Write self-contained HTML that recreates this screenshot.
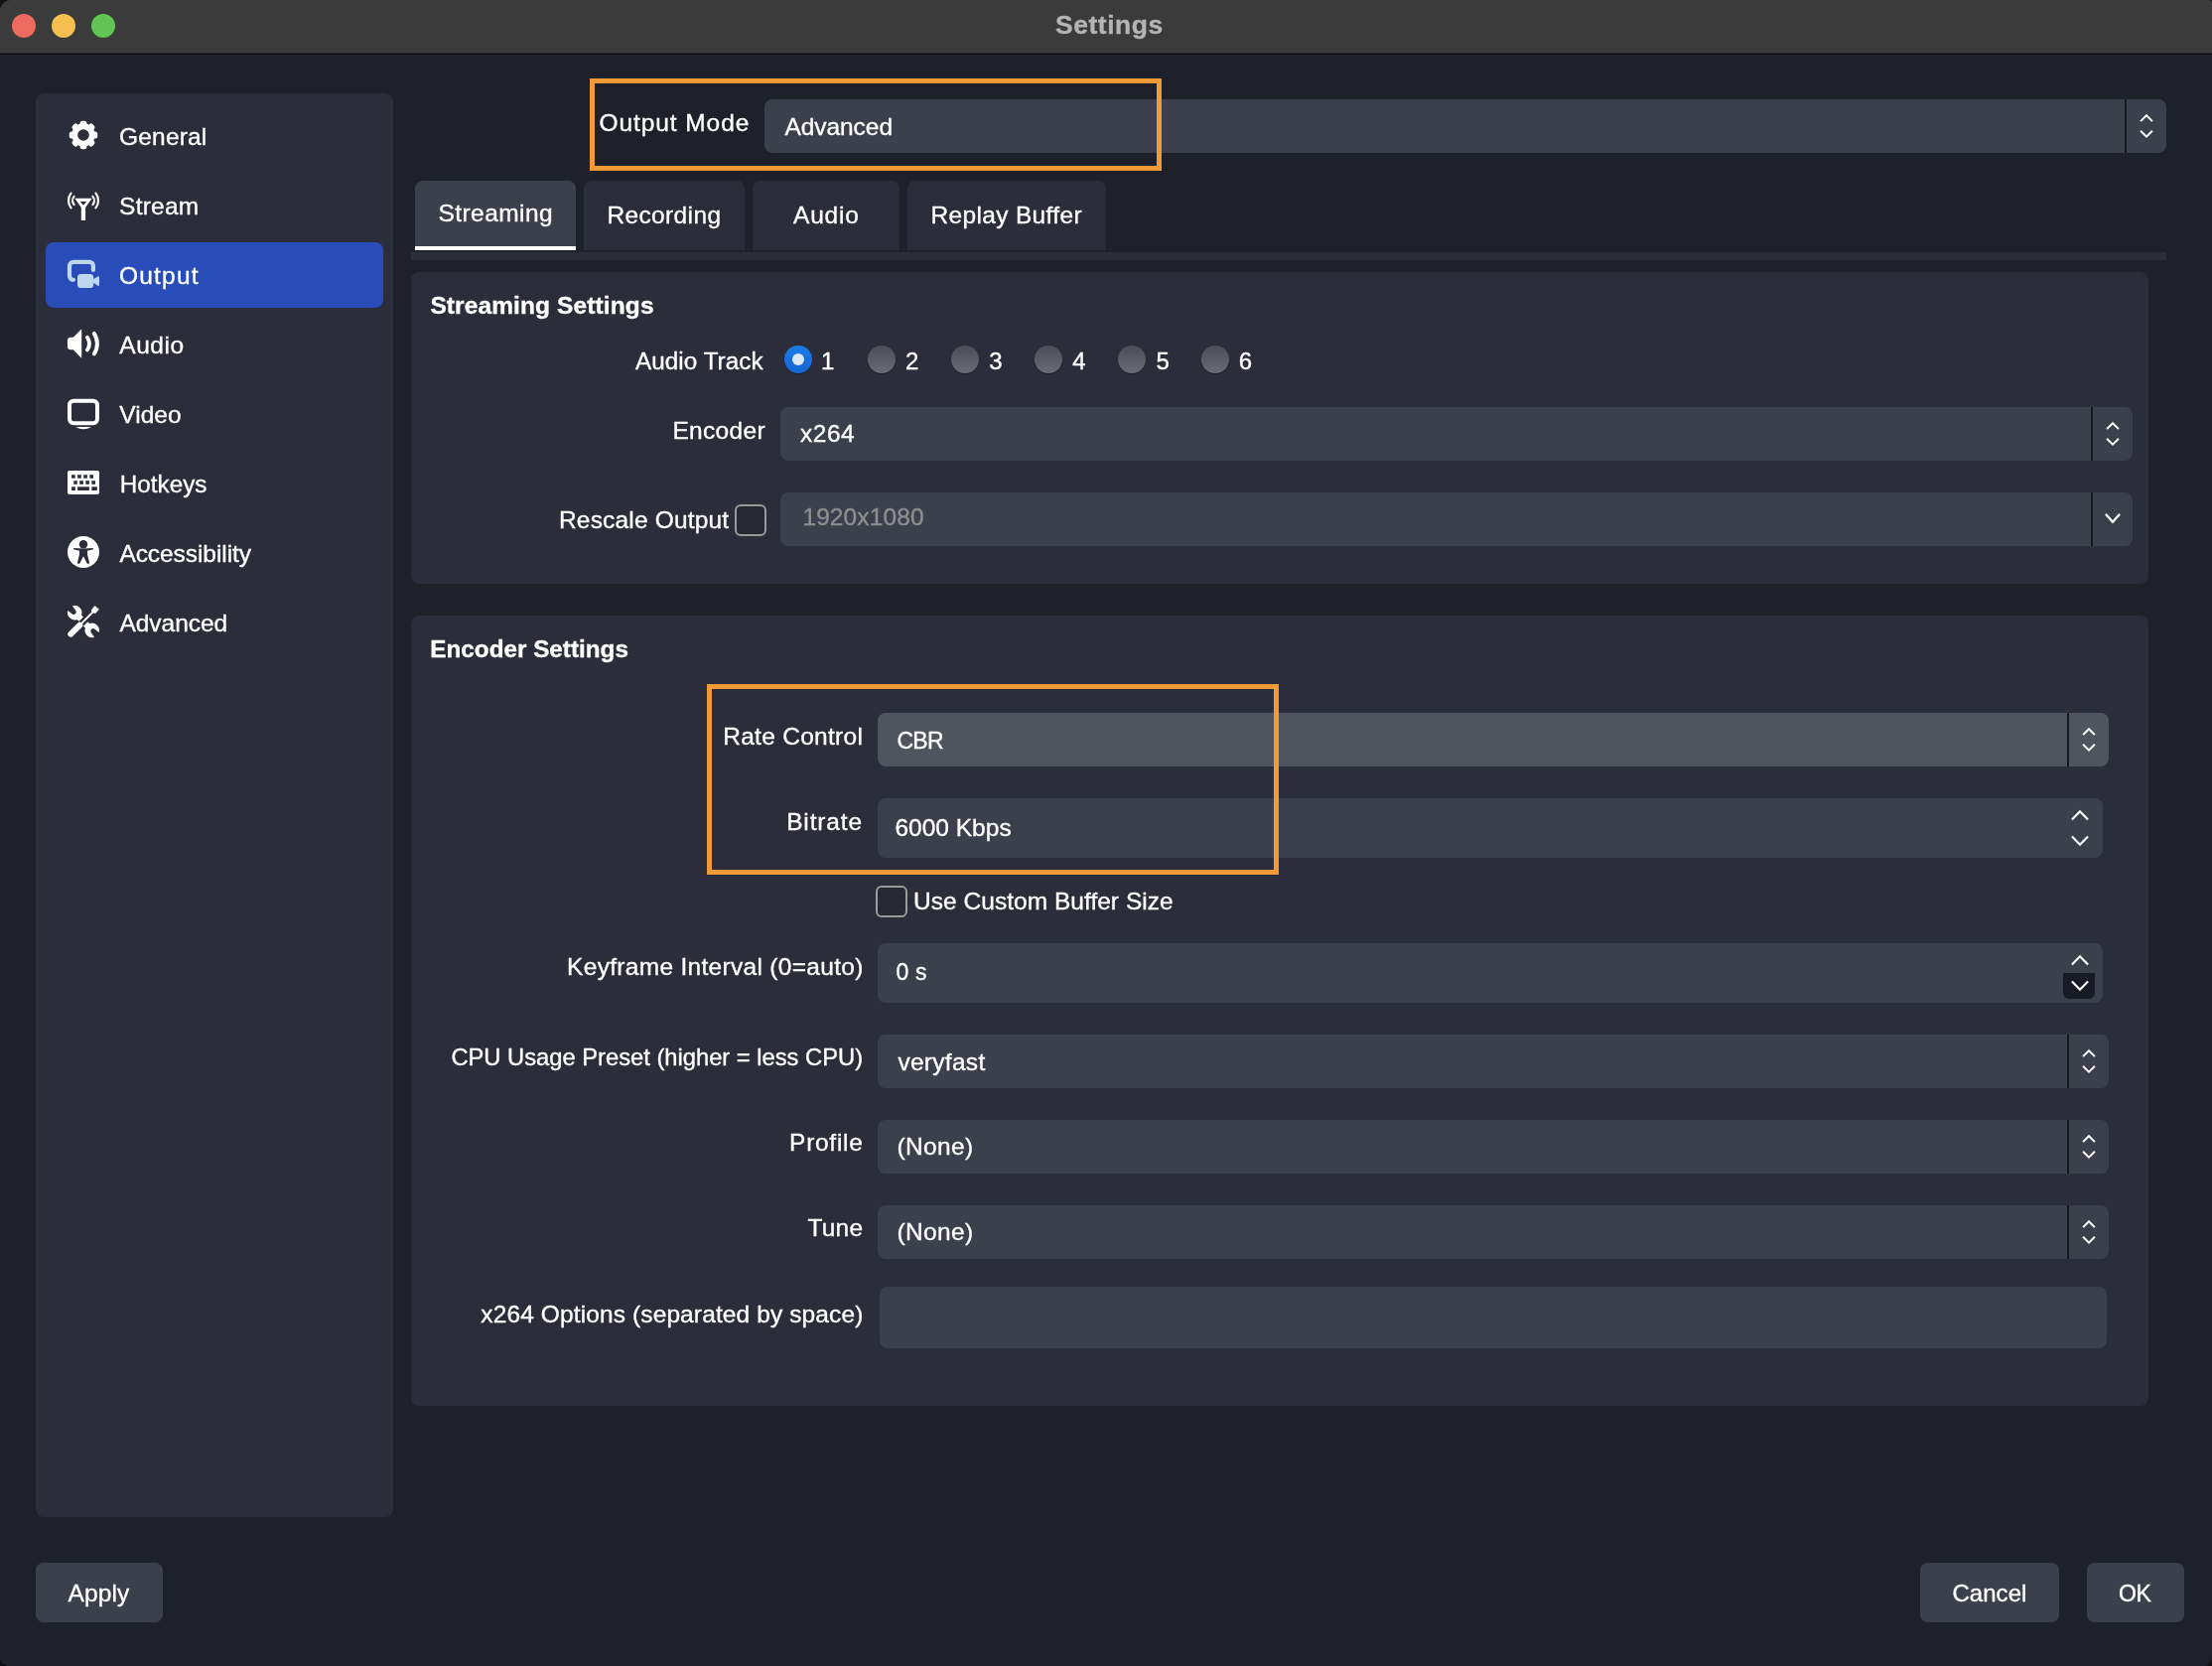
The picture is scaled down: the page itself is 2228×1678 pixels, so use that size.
<!DOCTYPE html>
<html lang="en"><head><meta charset="utf-8"><title>Settings</title>
<style>

html,body{margin:0;padding:0;background:#101012;}
body{width:2228px;height:1678px;overflow:hidden;}
#win{position:relative;width:2228px;height:1678px;background:#1f212a;border-radius:11px 3px 9px 9px;overflow:hidden;font-family:"Liberation Sans",sans-serif;}
#txt{position:absolute;left:0;top:0;width:2228px;height:1678px;will-change:transform;}
.t{position:absolute;white-space:pre;font-size:24px;line-height:30px;color:#fefefe;-webkit-text-stroke:0.35px currentColor;}
.b{position:absolute;box-sizing:border-box;}
.panel{background:#2b2d3a;border-radius:8px;}
.inp{background:#3c404d;border-radius:8px;}
.sep{background:#15171d;}
.tab{background:#2b2d3a;border-radius:8px 8px 0 0;}
.hl{border:5px solid #f39a38;}
.chk{border:2px solid #9a9a9a;border-radius:6px;background:#272934;}
.radio{border-radius:50%;width:28px;height:28px;background:linear-gradient(#4a4d57,#6a6c75);box-shadow:0 1px 1px rgba(0,0,0,.35);}
.radio.on{background:linear-gradient(#1b7ce8,#1466d2);}
.radio.on::after{content:"";position:absolute;left:8px;top:8px;width:12px;height:12px;border-radius:50%;background:#dde9fa;}
svg{position:absolute;overflow:visible;}
.ch{fill:none;stroke:#fefefe;stroke-width:2;stroke-linecap:square;stroke-linejoin:miter;}
.ch2{fill:none;stroke:#fefefe;stroke-width:2.2;stroke-linecap:square;stroke-linejoin:miter;}

</style></head>
<body>
<div id="win">
<div class="b " style="left:0px;top:0px;width:2228px;height:53px;background:#3b3b3b;"></div>
<div class="b " style="left:0px;top:53px;width:2228px;height:1px;background:#262626;"></div>
<div class="b " style="left:0px;top:54px;width:2228px;height:1px;background:#0c0c0e;"></div>
<div class="b" style="left:12px;top:14px;width:24px;height:24px;border-radius:50%;background:#ed6a5e;"></div>
<div class="b" style="left:52px;top:14px;width:24px;height:24px;border-radius:50%;background:#f5bf4f;"></div>
<div class="b" style="left:92px;top:14px;width:24px;height:24px;border-radius:50%;background:#61c554;"></div>
<div class="b panel" style="left:36px;top:94px;width:360px;height:1434px;"></div>
<div class="b " style="left:46px;top:244px;width:340px;height:66px;background:#284cb8;border-radius:8px;"></div>
<div class="b inp" style="left:770px;top:100px;width:1412px;height:54px;"></div><div class="b sep" style="left:2140px;top:100px;width:2px;height:54px;"></div><svg style="left:0;top:0" width="1" height="1"><polyline class="ch" points="2156.8,121.4 2162,116.2 2167.2,121.4"/><polyline class="ch" points="2156.8,132.4 2162,137.6 2167.2,132.4"/></svg>
<div class="b hl" style="left:594px;top:79px;width:576px;height:93px;"></div>
<div class="b tab" style="left:418px;top:182px;width:162px;height:70px;background:#3c404d;border-bottom:4px solid #fefefe;"></div>
<div class="b tab" style="left:588px;top:182px;width:162px;height:70px;"></div>
<div class="b tab" style="left:758px;top:182px;width:148px;height:70px;"></div>
<div class="b tab" style="left:914px;top:182px;width:200px;height:70px;"></div>
<div class="b " style="left:414px;top:254px;width:1768px;height:8px;background:#2b2d3a;"></div>
<div class="b panel" style="left:414px;top:274px;width:1750px;height:314px;"></div>
<div class="b radio on" style="left:790px;top:348px;"></div>
<div class="b radio" style="left:874px;top:348px;"></div>
<div class="b radio" style="left:958px;top:348px;"></div>
<div class="b radio" style="left:1042px;top:348px;"></div>
<div class="b radio" style="left:1126px;top:348px;"></div>
<div class="b radio" style="left:1210px;top:348px;"></div>
<div class="b inp" style="left:786px;top:410px;width:1362px;height:54px;"></div><div class="b sep" style="left:2106px;top:410px;width:2px;height:54px;"></div><svg style="left:0;top:0" width="1" height="1"><polyline class="ch" points="2122.8,431.4 2128,426.2 2133.2,431.4"/><polyline class="ch" points="2122.8,442.4 2128,447.6 2133.2,442.4"/></svg>
<div class="b chk" style="left:740px;top:508px;width:32px;height:32px;"></div>
<div class="b inp" style="left:786px;top:496px;width:1362px;height:54px;"></div>
<div class="b sep" style="left:2106px;top:496px;width:2px;height:54px;"></div>
<svg style="left:0;top:0" width="1" height="1"><polyline class="ch2" points="2121.6,518.6 2128,525.8000000000001 2134.4,518.6"/></svg>
<div class="b panel" style="left:414px;top:620px;width:1750px;height:796px;"></div>
<div class="b inp" style="left:884px;top:718px;width:1240px;height:54px;background:#50545f;"></div><div class="b sep" style="left:2082px;top:718px;width:2px;height:54px;"></div><svg style="left:0;top:0" width="1" height="1"><polyline class="ch" points="2098.8,739.4 2104,734.2 2109.2,739.4"/><polyline class="ch" points="2098.8,750.4 2104,755.6 2109.2,750.4"/></svg>
<div class="b inp" style="left:884px;top:804px;width:1234px;height:60px;"></div>
<svg style="left:0;top:0" width="1" height="1"><polyline class="ch2" points="2087.7,824.8 2095,817.3 2102.3,824.8"/><polyline class="ch2" points="2087.7,843.2 2095,850.7 2102.3,843.2"/></svg>
<div class="b hl" style="left:712px;top:689px;width:576px;height:192px;"></div>
<div class="b chk" style="left:882px;top:892px;width:32px;height:32px;"></div>
<div class="b inp" style="left:884px;top:950px;width:1234px;height:60px;"></div>
<div class="b " style="left:2078px;top:980px;width:32px;height:26px;background:#181a25;border-radius:0 0 6px 6px;"></div>
<svg style="left:0;top:0" width="1" height="1"><polyline class="ch2" points="2087.7,970.8 2095,963.3 2102.3,970.8"/><polyline class="ch2" points="2087.7,989.2 2095,996.7 2102.3,989.2"/></svg>
<div class="b inp" style="left:884px;top:1042px;width:1240px;height:54px;"></div><div class="b sep" style="left:2082px;top:1042px;width:2px;height:54px;"></div><svg style="left:0;top:0" width="1" height="1"><polyline class="ch" points="2098.8,1063.4 2104,1058.2 2109.2,1063.4"/><polyline class="ch" points="2098.8,1074.4 2104,1079.6 2109.2,1074.4"/></svg>
<div class="b inp" style="left:884px;top:1128px;width:1240px;height:54px;"></div><div class="b sep" style="left:2082px;top:1128px;width:2px;height:54px;"></div><svg style="left:0;top:0" width="1" height="1"><polyline class="ch" points="2098.8,1149.4 2104,1144.2 2109.2,1149.4"/><polyline class="ch" points="2098.8,1160.4 2104,1165.6 2109.2,1160.4"/></svg>
<div class="b inp" style="left:884px;top:1214px;width:1240px;height:54px;"></div><div class="b sep" style="left:2082px;top:1214px;width:2px;height:54px;"></div><svg style="left:0;top:0" width="1" height="1"><polyline class="ch" points="2098.8,1235.4 2104,1230.2 2109.2,1235.4"/><polyline class="ch" points="2098.8,1246.4 2104,1251.6 2109.2,1246.4"/></svg>
<div class="b inp" style="left:886px;top:1296px;width:1236px;height:62px;"></div>
<div class="b inp" style="left:36px;top:1574px;width:128px;height:60px;"></div>
<div class="b inp" style="left:1934px;top:1574px;width:140px;height:60px;"></div>
<div class="b inp" style="left:2102px;top:1574px;width:98px;height:60px;"></div>
<svg style="left:68px;top:120px" width="32" height="32" viewBox="0 0 32 32"><g fill="#fefefe"><circle cx="16" cy="16" r="11.7"/><rect x="12.6" y="1.7" width="6.8" height="8" rx="2.5" transform="rotate(0 16 16)"/><rect x="12.6" y="1.7" width="6.8" height="8" rx="2.5" transform="rotate(45 16 16)"/><rect x="12.6" y="1.7" width="6.8" height="8" rx="2.5" transform="rotate(90 16 16)"/><rect x="12.6" y="1.7" width="6.8" height="8" rx="2.5" transform="rotate(135 16 16)"/><rect x="12.6" y="1.7" width="6.8" height="8" rx="2.5" transform="rotate(180 16 16)"/><rect x="12.6" y="1.7" width="6.8" height="8" rx="2.5" transform="rotate(225 16 16)"/><rect x="12.6" y="1.7" width="6.8" height="8" rx="2.5" transform="rotate(270 16 16)"/><rect x="12.6" y="1.7" width="6.8" height="8" rx="2.5" transform="rotate(315 16 16)"/></g><circle cx="16" cy="16" r="5.8" fill="#2b2d3a"/></svg>
<svg style="left:68px;top:190px" width="32" height="32" viewBox="0 0 32 32"><path fill="#fefefe" fill-rule="evenodd" d="M8.3 9.7 H23.7 Q24.8 9.7 24.2 10.6 L18.1 18.9 V32 H13.8 V18.9 L7.8 10.6 Q7.2 9.7 8.3 9.7 Z M12.7 13.1 H19.2 L15.95 16.8 Z"/><path fill="none" stroke="#fefefe" stroke-width="2.2" stroke-linecap="round" d="M3.54 4.61 A12 12 0 0 0 3.54 19.39 M28.46 4.61 A12 12 0 0 1 28.46 19.39 M6.60 7.89 A6.4 6.4 0 0 0 6.60 16.11 M25.40 7.89 A6.4 6.4 0 0 1 25.40 16.11"/></svg>
<svg style="left:68px;top:260px" width="32" height="32" viewBox="0 0 32 32"><path fill="none" stroke="#bdd7ef" stroke-width="4.2" stroke-linecap="round" d="M5.9 21.8 A3.9 3.9 0 0 1 2 17.9 V7.8 A3.9 3.9 0 0 1 5.9 3.9 H22 A3.9 3.9 0 0 1 25.9 7.8 V12"/><rect x="10" y="16.1" width="16.2" height="13.9" rx="3.6" fill="#bdd7ef"/><path fill="#bdd7ef" d="M25.5 21.6 L30.6 18.4 Q32 17.7 32 19.2 V26.9 Q32 28.4 30.6 27.7 L25.5 24.6 Z"/></svg>
<svg style="left:68px;top:330px" width="32" height="32" viewBox="0 0 32 32"><path fill="#fefefe" d="M3.4 9.7 H5.8 L13.5 2 Q14.2 1.4 14.2 2.4 V29.7 Q14.2 30.8 13.5 30.2 L5.8 22.3 H3.4 Q0 22.3 0 19 V13 Q0 9.7 3.4 9.7 Z"/><path fill="none" stroke="#fefefe" stroke-width="3.9" stroke-linecap="round" d="M19.9 9.8 A11.4 11.4 0 0 1 19.9 22.5 M26.8 5.9 A18.5 18.5 0 0 1 26.8 26.4"/></svg>
<svg style="left:68px;top:400px" width="32" height="32" viewBox="0 0 32 32"><rect x="2" y="3.7" width="28" height="22.6" rx="4.2" fill="none" stroke="#fefefe" stroke-width="4"/><path fill="#fefefe" d="M8.2 30 H24 Q16 34.4 8.2 30 Z"/></svg>
<svg style="left:68px;top:470px" width="32" height="32" viewBox="0 0 32 32"><rect x="0" y="3.9" width="32" height="24.2" rx="2" fill="#fefefe"/><g fill="#2b2d3a"><rect x="4.1" y="8.2" width="3.6" height="3.5"/><rect x="10.1" y="8.2" width="3.7" height="3.5"/><rect x="16.2" y="8.2" width="3.7" height="3.5"/><rect x="22.3" y="8.2" width="3.7" height="3.5"/><rect x="6.3" y="14.2" width="3.5" height="3.6"/><rect x="12.2" y="14.2" width="3.7" height="3.6"/><rect x="18.3" y="14.2" width="3.6" height="3.6"/><rect x="24.3" y="14.2" width="3.7" height="3.6"/><rect x="4.1" y="20.3" width="3.8" height="3.7"/><rect x="10.1" y="20.3" width="11.8" height="3.7"/><rect x="24.3" y="20.3" width="5.5" height="3.7"/></g></svg>
<svg style="left:68px;top:540px" width="32" height="32" viewBox="0 0 32 32"><circle cx="16" cy="16" r="16" fill="#fefefe"/><g fill="#2b2d3a"><circle cx="16" cy="8.2" r="4.2"/><path d="M6.2 11.9 L16 12.6 L25.8 11.9 L26 13.3 L20 14.8 L20 18.5 L22.2 27.3 L20 28 L16 20.3 L12 28 L9.8 27.3 L12 18.5 L12 14.8 L6 13.3 Z"/></g></svg>
<svg style="left:68px;top:610px" width="32" height="32" viewBox="0 0 32 32"><g fill="#fefefe"><path d="M4.91 0.22 A7.25 7.25 0 0 1 14.03 9.53 L16 11.5 L11.5 15.7 L9.70 13.90 A7.25 7.25 0 0 1 0.27 4.95 L5.2 8.8 A2.65 2.65 0 0 0 8.5 5.2 Z"/><path d="M4.91 0.22 A7.25 7.25 0 0 1 14.03 9.53 L16 11.5 L11.5 15.7 L9.70 13.90 A7.25 7.25 0 0 1 0.27 4.95 L5.2 8.8 A2.65 2.65 0 0 0 8.5 5.2 Z" transform="rotate(180 16 16)"/><path d="M27.4 0 L31.9 3.8 L28.5 7.4 Q27.5 8.2 26.4 7.6 L24.5 6.5 Q23.3 5.5 24.3 4.1 Z"/></g><path d="M3.3 28.7 L12.4 19.6" stroke="#fefefe" stroke-width="5.9" stroke-linecap="round" fill="none"/><path d="M12.4 19.6 L25.5 6.5" stroke="#fefefe" stroke-width="1.9" fill="none"/></svg>
<div id="txt">
<span class="t" id="title" style="left:1063.10px;top:10.02px;font-size:26.5px;font-weight:700;color:#b4b4b4;letter-spacing:0.500px;">Settings</span>
<span class="t" id="sb1" style="left:120.10px;top:122.51px;font-size:24.5px;letter-spacing:0.164px;">General</span>
<span class="t" id="sb2" style="left:120.10px;top:192.51px;font-size:24.5px;letter-spacing:0.228px;">Stream</span>
<span class="t" id="sb3" style="left:120.10px;top:262.51px;font-size:24.5px;letter-spacing:1.172px;">Output</span>
<span class="t" id="sb4" style="left:120.30px;top:332.51px;font-size:24.5px;letter-spacing:0.516px;">Audio</span>
<span class="t" id="sb5" style="left:120.30px;top:402.51px;font-size:24.5px;letter-spacing:0.027px;">Video</span>
<span class="t" id="sb6" style="left:120.80px;top:472.60px;font-size:24.25px;">Hotkeys</span>
<span class="t" id="sb7" style="left:120.40px;top:542.51px;font-size:24.5px;letter-spacing:-0.064px;">Accessibility</span>
<span class="t" id="sb8" style="left:120.40px;top:612.51px;font-size:24.5px;letter-spacing:-0.021px;">Advanced</span>
<span class="t" id="om" style="left:603.40px;top:108.51px;font-size:24.5px;letter-spacing:0.929px;">Output Mode</span>
<span class="t" id="omv" style="left:790.40px;top:112.51px;font-size:24.5px;letter-spacing:-0.049px;">Advanced</span>
<span class="t" id="tab1" style="left:441.40px;top:199.51px;font-size:24.5px;letter-spacing:0.458px;">Streaming</span>
<span class="t" id="tab2" style="left:611.40px;top:202.01px;font-size:24.5px;letter-spacing:0.369px;">Recording</span>
<span class="t" id="tab3" style="left:799.10px;top:202.01px;font-size:24.5px;letter-spacing:0.766px;">Audio</span>
<span class="t" id="tab4" style="left:937.40px;top:202.01px;font-size:24.5px;letter-spacing:0.347px;">Replay Buffer</span>
<span class="t" id="g1" style="left:433.40px;top:292.51px;font-size:24.5px;font-weight:700;letter-spacing:0.110px;">Streaming Settings</span>
<span class="t" id="at" style="left:640.00px;top:348.60px;font-size:24.25px;letter-spacing:0.054px;">Audio Track</span>
<span class="t" id="r1" style="left:827.00px;top:348.68px;">1</span>
<span class="t" id="r2" style="left:911.90px;top:348.68px;">2</span>
<span class="t" id="r3" style="left:996.35px;top:348.68px;">3</span>
<span class="t" id="r4" style="left:1080.25px;top:348.68px;">4</span>
<span class="t" id="r5" style="left:1164.50px;top:348.68px;">5</span>
<span class="t" id="r6" style="left:1247.75px;top:348.68px;">6</span>
<span class="t" id="enc" style="left:677.40px;top:418.51px;font-size:24.5px;letter-spacing:0.318px;">Encoder</span>
<span class="t" id="encv" style="left:806.00px;top:422.01px;font-size:24.5px;letter-spacing:0.533px;">x264</span>
<span class="t" id="ro" style="left:563.00px;top:508.91px;font-size:24.5px;letter-spacing:0.172px;">Rescale Output</span>
<span class="t" id="rov" style="left:808.40px;top:506.01px;font-size:24.5px;color:#8e8e8e;letter-spacing:0.109px;">1920x1080</span>
<span class="t" id="g2" style="left:433.30px;top:638.60px;font-size:24.25px;font-weight:700;letter-spacing:0.011px;">Encoder Settings</span>
<span class="t" id="rc" style="left:728.20px;top:726.51px;font-size:24.5px;letter-spacing:0.282px;">Rate Control</span>
<span class="t" id="rcv" style="left:903.40px;top:731.33px;font-size:23.0px;letter-spacing:-0.675px;">CBR</span>
<span class="t" id="br" style="left:792.20px;top:812.51px;font-size:24.5px;letter-spacing:0.836px;">Bitrate</span>
<span class="t" id="brv" style="left:901.40px;top:818.81px;font-size:24.5px;letter-spacing:0.012px;">6000 Kbps</span>
<span class="t" id="cb" style="left:920.10px;top:893.21px;font-size:24.5px;letter-spacing:0.026px;">Use Custom Buffer Size</span>
<span class="t" id="ki" style="left:571.10px;top:958.91px;font-size:24.5px;letter-spacing:0.301px;">Keyframe Interval (0=auto)</span>
<span class="t" id="kiv" style="left:902.40px;top:964.03px;font-size:23.0px;letter-spacing:0.209px;">0 s</span>
<span class="t" id="cpu" style="left:454.40px;top:1050.47px;font-size:23.75px;letter-spacing:-0.012px;">CPU Usage Preset (higher = less CPU)</span>
<span class="t" id="cpuv" style="left:904.40px;top:1054.51px;font-size:24.5px;letter-spacing:0.290px;">veryfast</span>
<span class="t" id="pf" style="left:795.10px;top:1136.21px;font-size:24.5px;letter-spacing:0.714px;">Profile</span>
<span class="t" id="pfv" style="left:903.40px;top:1140.31px;font-size:24.5px;letter-spacing:0.354px;">(None)</span>
<span class="t" id="tu" style="left:813.40px;top:1222.11px;font-size:24.5px;letter-spacing:0.231px;">Tune</span>
<span class="t" id="tuv" style="left:903.40px;top:1226.31px;font-size:24.5px;letter-spacing:0.354px;">(None)</span>
<span class="t" id="xo" style="left:484.30px;top:1308.51px;font-size:24.5px;letter-spacing:0.117px;">x264 Options (separated by space)</span>
<span class="t" id="apply" style="left:68.40px;top:1589.51px;font-size:24.5px;letter-spacing:0.166px;">Apply</span>
<span class="t" id="cancel" style="left:1966.40px;top:1589.68px;letter-spacing:0.065px;">Cancel</span>
<span class="t" id="ok" style="left:2134.00px;top:1590.03px;font-size:23.0px;letter-spacing:-0.490px;">OK</span>
</div>
</div>
</body></html>
